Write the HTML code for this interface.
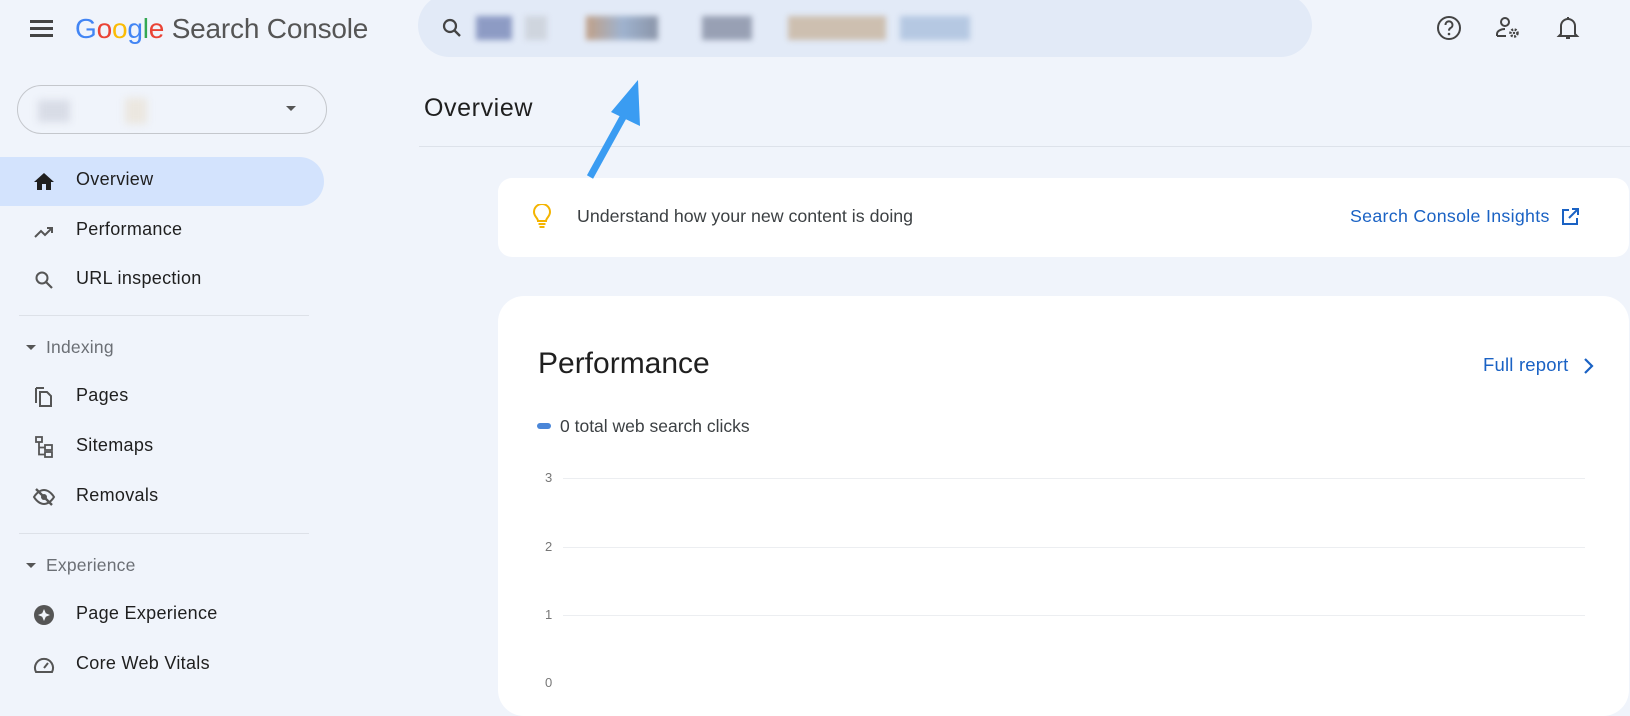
<!DOCTYPE html>
<html><head><meta charset="utf-8"><style>
*{margin:0;padding:0;box-sizing:border-box}
body{width:1630px;height:680px;overflow:hidden;background:#f0f4fb;font-family:"Liberation Sans",Arial,sans-serif;position:relative;color:#1f1f1f}
.a{position:absolute}
.nav{position:absolute;left:76px;font-size:18px;letter-spacing:0.3px;color:#1f1f1f}
.ic{position:absolute;left:32px}
.sec{position:absolute;left:46px;font-size:17.5px;letter-spacing:0.2px;color:#6b6f75}
.blob{position:absolute;top:16px;height:24px;filter:blur(3px)}
</style></head><body>
<div class="a" style="left:30px;top:20px;width:23px;height:3px;background:#444"></div>
<div class="a" style="left:30px;top:27px;width:23px;height:3px;background:#444"></div>
<div class="a" style="left:30px;top:34px;width:23px;height:3px;background:#444"></div>
<div class="a" style="left:75px;top:13px;font-size:28px;letter-spacing:-0.2px;white-space:nowrap"><span style="color:#4285f4">G</span><span style="color:#ea4335">o</span><span style="color:#fbbc05">o</span><span style="color:#4285f4">g</span><span style="color:#34a853">l</span><span style="color:#ea4335">e</span><span style="color:#555"> Search Console</span></div>
<div class="a" style="left:418px;top:-6px;width:894px;height:63px;border-radius:32px;background:#e2eaf7"></div>
<svg class="a" style="left:440px;top:16px" width="24" height="24" viewBox="0 0 24 24"><circle cx="10" cy="10" r="6" fill="none" stroke="#444" stroke-width="2.2"/><path d="M14.5 14.5L20 20" stroke="#444" stroke-width="2.4"/></svg>
<div class="blob" style="left:476px;width:36px;background:#8d9bc4"></div>
<div class="blob" style="left:525px;width:22px;background:#cfd5de"></div>
<div class="blob" style="left:586px;width:72px;background:linear-gradient(90deg,#c0a088,#9fb3cf,#8a94a8)"></div>
<div class="blob" style="left:702px;width:50px;background:#98a0b4"></div>
<div class="blob" style="left:788px;width:98px;background:#cdbfb0"></div>
<div class="blob" style="left:900px;width:70px;background:#b5c8e2"></div>
<svg class="a" style="left:1435px;top:14px" width="28" height="28" viewBox="0 0 28 28"><circle cx="14" cy="14" r="11" fill="none" stroke="#444" stroke-width="2"/><path d="M10.5 11a3.5 3.5 0 1 1 5 3c-1.2.7-1.5 1.3-1.5 2.6" fill="none" stroke="#444" stroke-width="2"/><circle cx="14" cy="20" r="1.3" fill="#444"/></svg>
<svg class="a" style="left:1494px;top:14px" width="30" height="28" viewBox="0 0 30 28"><circle cx="11" cy="8" r="4" fill="none" stroke="#444" stroke-width="2"/><path d="M3 22v-2c0-3 4-5 8-5" fill="none" stroke="#444" stroke-width="2"/><path d="M3 22h9" stroke="#444" stroke-width="2"/><circle cx="20" cy="19" r="3.5" fill="none" stroke="#444" stroke-width="2.5" stroke-dasharray="2 1.4"/><circle cx="20" cy="19" r="1.2" fill="#444"/></svg>
<svg class="a" style="left:1556px;top:14px" width="24" height="28" viewBox="0 0 24 28"><path d="M5 20V12a7 7 0 0 1 14 0v8l2 2H3z" fill="none" stroke="#444" stroke-width="2"/><path d="M10 24h4" stroke="#444" stroke-width="2"/><path d="M12 3v2" stroke="#444" stroke-width="2"/></svg>
<div class="a" style="left:17px;top:85px;width:310px;height:49px;border:1px solid #c4c7cc;border-radius:25px"></div>
<div class="a" style="left:38px;top:100px;width:32px;height:22px;background:#d8dce6;filter:blur(4px)"></div>
<div class="a" style="left:125px;top:98px;width:22px;height:26px;background:#ebe7e0;filter:blur(4px)"></div>
<div class="a" style="left:286px;top:106px;width:0;height:0;border-left:5px solid transparent;border-right:5px solid transparent;border-top:5px solid #555"></div>
<div class="a" style="left:0;top:157px;width:324px;height:49px;background:#d3e3fd;border-radius:0 25px 25px 0"></div>
<svg class="ic" style="top:170px" width="24" height="24" viewBox="0 0 24 24"><path d="M10 20v-6h4v6h5v-8h3L12 3 2 12h3v8z" fill="#1f1f1f"/></svg>
<div class="nav" style="top:169px">Overview</div>
<svg class="ic" style="top:219px" width="24" height="24" viewBox="0 0 24 24"><path d="M3 18l6-6 4 4 7-7M15 9h5v5" fill="none" stroke="#555" stroke-width="2"/></svg>
<div class="nav" style="top:219px">Performance</div>
<svg class="ic" style="top:268px" width="24" height="24" viewBox="0 0 24 24"><circle cx="10" cy="10" r="5.5" fill="none" stroke="#555" stroke-width="2"/><path d="M14 14l6 6" stroke="#555" stroke-width="2.2"/></svg>
<div class="nav" style="top:268px">URL inspection</div>
<div class="a" style="left:19px;top:315px;width:290px;height:1px;background:#dde1e8"></div>
<div class="a" style="left:26px;top:345px;border-left:5px solid transparent;border-right:5px solid transparent;border-top:5px solid #555"></div>
<div class="sec" style="top:337px">Indexing</div>
<svg class="ic" style="top:385px" width="24" height="24" viewBox="0 0 24 24"><path d="M4 3v15" stroke="#555" stroke-width="2" fill="none"/><path d="M4 3h8" stroke="#555" stroke-width="2"/><path d="M8 7h7l4 4v10H8z" fill="none" stroke="#555" stroke-width="2"/></svg>
<div class="nav" style="top:385px">Pages</div>
<svg class="ic" style="top:435px" width="24" height="24" viewBox="0 0 24 24"><rect x="4" y="2" width="6" height="5" fill="none" stroke="#555" stroke-width="1.8"/><rect x="13" y="10" width="7" height="5" fill="none" stroke="#555" stroke-width="1.8"/><rect x="13" y="17" width="7" height="5" fill="none" stroke="#555" stroke-width="1.8"/><path d="M7 7v12.5h6M7 12.5h6" fill="none" stroke="#555" stroke-width="1.8"/></svg>
<div class="nav" style="top:435px">Sitemaps</div>
<svg class="ic" style="top:485px" width="24" height="24" viewBox="0 0 24 24"><path d="M2 12s4-7 10-7 10 7 10 7-4 7-10 7S2 12 2 12z" fill="none" stroke="#555" stroke-width="2"/><circle cx="12" cy="12" r="3" fill="#555"/><path d="M4 4l16 16" stroke="#555" stroke-width="2.4"/></svg>
<div class="nav" style="top:485px">Removals</div>
<div class="a" style="left:19px;top:533px;width:290px;height:1px;background:#dde1e8"></div>
<div class="a" style="left:26px;top:563px;border-left:5px solid transparent;border-right:5px solid transparent;border-top:5px solid #555"></div>
<div class="sec" style="top:555px">Experience</div>
<svg class="ic" style="top:603px" width="24" height="24" viewBox="0 0 24 24"><circle cx="12" cy="12" r="10" fill="#555"/><path d="M12 6l1.8 4.2L18 12l-4.2 1.8L12 18l-1.8-4.2L6 12l4.2-1.8z" fill="#f0f4fb"/></svg>
<div class="nav" style="top:603px">Page Experience</div>
<svg class="ic" style="top:653px" width="24" height="24" viewBox="0 0 24 24"><path d="M4 19a9 9 0 1 1 16 0z" fill="none" stroke="#555" stroke-width="2"/><path d="M12 15l4-5" stroke="#555" stroke-width="2"/></svg>
<div class="nav" style="top:653px">Core Web Vitals</div>
<div class="a" style="left:424px;top:94px;font-size:25px;letter-spacing:0.6px;color:#1f1f1f">Overview</div>
<div class="a" style="left:419px;top:146px;width:1211px;height:1px;background:#dde2ea"></div>
<div class="a" style="left:498px;top:178px;width:1131px;height:79px;background:#fff;border-radius:14px"></div>
<svg class="a" style="left:531px;top:204px" width="22" height="26" viewBox="0 0 22 26"><path d="M7 17c0-3-4-4.5-4-9a8 8 0 0 1 16 0c0 4.5-4 6-4 9z" fill="none" stroke="#f4b400" stroke-width="2"/><path d="M7.5 20h7M8.5 23h5" stroke="#f4b400" stroke-width="2"/></svg>
<div class="a" style="left:577px;top:206px;font-size:17.8px;color:#3c4043">Understand how your new content is doing</div>
<div class="a" style="left:1350px;top:206px;font-size:17.8px;letter-spacing:0.3px;color:#1a62c4">Search Console Insights</div>
<svg class="a" style="left:1560px;top:207px" width="20" height="20" viewBox="0 0 20 20"><path d="M9 3H3v14h14v-6" fill="none" stroke="#1a62c4" stroke-width="2"/><path d="M12 2h6v6M18 2l-9 9" fill="none" stroke="#1a62c4" stroke-width="2"/></svg>
<div class="a" style="left:498px;top:296px;width:1131px;height:420px;background:#fff;border-radius:26px"></div>
<div class="a" style="left:538px;top:347px;font-size:30px;color:#1f1f1f">Performance</div>
<div class="a" style="left:1483px;top:354px;font-size:18.5px;letter-spacing:0.2px;color:#1a62c4">Full report</div>
<svg class="a" style="left:1581px;top:356px" width="14" height="20" viewBox="0 0 14 20"><path d="M4 3l7 7-7 7" fill="none" stroke="#1a62c4" stroke-width="2.2"/></svg>
<div class="a" style="left:537px;top:423px;width:14px;height:6px;border-radius:3px;background:#4a86d8"></div>
<div class="a" style="left:560px;top:416px;font-size:17.5px;color:#3c4043">0 total web search clicks</div>
<div class="a" style="left:545px;top:470px;font-size:13px;color:#777">3</div>
<div class="a" style="left:563px;top:478px;width:1022px;height:1px;background:#eceef1"></div>
<div class="a" style="left:545px;top:539px;font-size:13px;color:#777">2</div>
<div class="a" style="left:563px;top:547px;width:1022px;height:1px;background:#eceef1"></div>
<div class="a" style="left:545px;top:607px;font-size:13px;color:#777">1</div>
<div class="a" style="left:563px;top:615px;width:1022px;height:1px;background:#eceef1"></div>
<div class="a" style="left:545px;top:675px;font-size:13px;color:#777">0</div>
<svg class="a" style="left:0;top:0" width="1630" height="680"><path d="M590 177L627 110" stroke="#3a9cf2" stroke-width="7"/><path d="M638 80L640 126L611 112z" fill="#3a9cf2"/></svg>
</body></html>
